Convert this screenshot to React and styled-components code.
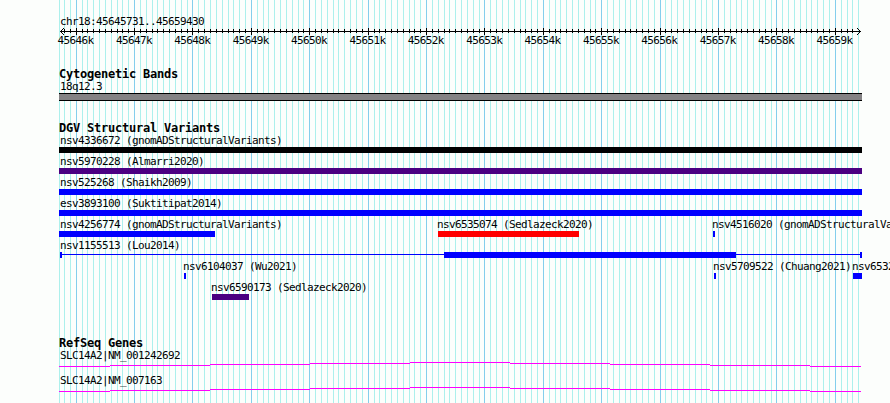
import styled, { createGlobalStyle } from 'styled-components';

const GlobalStyle = createGlobalStyle`
  body {
    margin: 0;
    background-color: #fcfefc;
    overflow: hidden;
  }
`;

const START = 45645731;
const SCALE = 800 / 13700;
const PAD_LEFT = 60;
const LEFT = 59;

const toX = (pos) => Math.round(PAD_LEFT + (pos - START) * SCALE);

const ticks = [];
for (let pos = 45645700; pos <= 45659400; pos += 100) {
  ticks.push({ pos, x: Math.max(LEFT, toX(pos)), major: pos % 1000 === 0 });
}
const majors = ticks.filter((tick) => tick.major);

const Panel = styled.main`
  position: relative;
  display: flex;
  flex-direction: column;
  width: 890px;
  height: 403px;
  overflow: hidden;
  color: #000;
  font-family: 'DejaVu Sans Mono', 'Liberation Mono', monospace;
`;

const GridLines = styled.svg`
  position: absolute;
  top: 0;
  left: 0;
  z-index: -1;
`;

const Label = styled.div`
  height: 13px;
  line-height: 13px;
  font-size: 11px;
  letter-spacing: -0.622px;
  white-space: pre;
  margin-left: ${({ $shift }) => $shift || 0}px;
`;

const Title = styled.h2`
  margin: 0 0 0 59px;
  height: 13px;
  line-height: 13px;
  font-size: 12px;
  font-weight: 700;
  letter-spacing: -0.224px;
  white-space: pre;
`;

const Ruler = styled.header`
  height: 53px;
  padding-top: 15px;
`;

const Region = styled(Label)`
  margin-left: 60px;
`;

const Axis = styled.svg`
  display: block;
`;

const TickLabels = styled.div`
  display: flex;
  gap: 22.39px;
  margin: -1px 0 0 57.6px;
`;

const TickLabel = styled(Label)`
  flex: none;
  width: 36px;
`;

const Track = styled.section`
  height: ${({ $height }) => $height}px;
`;

const Lane = styled.div`
  display: flex;
  height: ${({ $height }) => $height || 21}px;
  margin-top: ${({ $top }) => $top || 0}px;
`;

const Feature = styled.div`
  flex: none;
  width: ${({ $width }) => $width}px;
  margin-left: ${({ $gap }) => $gap}px;
`;

const Bar = styled.div`
  height: 6px;
  background-color: ${({ $color }) => $color};
`;

const Band = styled.div`
  box-sizing: border-box;
  height: 8px;
  border: solid #000;
  border-width: 1px 0;
  background-color: #848284;
`;

const Split = styled.div`
  display: flex;
  height: 6px;
`;

const Block = styled.div`
  width: ${({ $width }) => $width}px;
  background-color: #0000ff;
`;

const Thin = styled.div`
  width: ${({ $width }) => $width}px;
  height: 1px;
  margin-top: 2px;
  background-color: #0000ff;
`;

const Intron = styled.svg`
  display: block;
`;

const BLUE = '#0000ff';
const PURPLE = '#4b0082';

const lanes = [
  [{ name: 'nsv4336672 (gnomADStructuralVariants)', from: 59, to: 862, color: '#000' }],
  [{ name: 'nsv5970228 (Almarri2020)', from: 59, to: 862, color: PURPLE }],
  [{ name: 'nsv525268 (Shaikh2009)', from: 59, to: 862, color: BLUE }],
  [{ name: 'esv3893100 (Suktitipat2014)', from: 59, to: 862, color: BLUE }],
  [
    { name: 'nsv4256774 (gnomADStructuralVariants)', from: 59, to: 215, color: BLUE },
    { name: 'nsv6535074 (Sedlazeck2020)', from: 438, to: 579, color: '#ff0000' },
    { name: 'nsv4516020 (gnomADStructuralVariants)', from: 713, to: 715, color: BLUE },
  ],
  [{ name: 'nsv1155513 (Lou2014)', from: 60, to: 862, split: true }],
  [
    { name: 'nsv6104037 (Wu2021)', from: 184, to: 186, color: BLUE },
    { name: 'nsv5709522 (Chuang2021)', from: 714, to: 716, color: BLUE },
    { name: 'nsv6532074 (Sedlazeck2020)', from: 853, to: 862, color: BLUE },
  ],
  [{ name: 'nsv6590173 (Sedlazeck2020)', from: 212, to: 249, color: PURPLE }],
];

// x offset, length, and y of each piece of the arched intron line
const intron = [
  [0, 51, 4],
  [51, 100, 3],
  [151, 100, 2],
  [251, 100, 1],
  [351, 100, 0],
  [451, 100, 1],
  [551, 100, 2],
  [651, 100, 3],
  [751, 51, 4],
];

const genes = ['SLC14A2|NM_001242692', 'SLC14A2|NM_007163'];

const Grid = () => (
  <GridLines width="890" height="403" shapeRendering="crispEdges">
    {ticks.map(({ pos, x, major }) => (
      <rect key={pos} x={x} y="0" width="1" height="403" fill={major ? '#84ceec' : '#acf0ec'} />
    ))}
  </GridLines>
);

const Scale = () => (
  <Ruler>
    <Region>chr18:45645731..45659430</Region>
    <Axis width="890" height="7" shapeRendering="crispEdges">
      <rect x="60" y="3" width="801" height="1" />
      {ticks.filter(({ x }) => x > 62 && x < 858).map(({ pos, x, major }) => (
        <rect key={pos} x={x} y={major ? 0 : 1} width="1" height={major ? 7 : 4} />
      ))}
      {[1, 2, 3].map((i) => (
        <g key={i}>
          <rect x={60 + i} y={3 - i} width="1" height="1" />
          <rect x={60 + i} y={3 + i} width="1" height="1" />
          <rect x={860 - i} y={3 - i} width="1" height="1" />
          <rect x={860 - i} y={3 + i} width="1" height="1" />
        </g>
      ))}
    </Axis>
    <TickLabels>
      {majors.map(({ pos }) => (
        <TickLabel key={pos}>{pos / 1000}k</TickLabel>
      ))}
    </TickLabels>
  </Ruler>
);

const Variant = ({ item, prevEnd }) => (
  <Feature $gap={item.from - prevEnd} $width={item.to - item.from}>
    <Label $shift={item.from === LEFT ? 1 : item.split ? 0 : -1}>{item.name}</Label>
    {item.split ? (
      <Split>
        <Block $width={2} />
        <Thin $width={382} />
        <Block $width={292} />
        <Thin $width={124} />
        <Block $width={2} />
      </Split>
    ) : (
      <Bar $color={item.color} />
    )}
  </Feature>
);

const App = () => (
  <>
    <GlobalStyle />
    <Panel>
      <Grid />
      <Scale />
      <Track $height={54}>
        <Title>Cytogenetic Bands</Title>
        <Lane $top={-1}>
          <Feature $gap={59} $width={803}>
            <Label $shift={1}>18q12.3</Label>
            <Band />
          </Feature>
        </Lane>
      </Track>
      <Track $height={215}>
        <Title>DGV Structural Variants</Title>
        {lanes.map((lane, index) => (
          <Lane key={index} $top={index === 0 ? -1 : 0}>
            {lane.map((item, i) => (
              <Variant key={item.name} item={item} prevEnd={i ? lane[i - 1].to : 0} />
            ))}
          </Lane>
        ))}
      </Track>
      <Track $height={66}>
        <Title>RefSeq Genes</Title>
        {genes.map((gene, index) => (
          <Lane key={gene} $height={25} $top={index === 0 ? -1 : 0}>
            <Feature $gap={59} $width={802}>
              <Label $shift={1}>{gene}</Label>
              <Intron width="802" height="5" shapeRendering="crispEdges">
                {intron.map(([x, width, y]) => (
                  <rect key={x} x={x} y={y} width={width} height="1" fill="#ff00ff" />
                ))}
              </Intron>
            </Feature>
          </Lane>
        ))}
      </Track>
    </Panel>
  </>
);

export default App;
